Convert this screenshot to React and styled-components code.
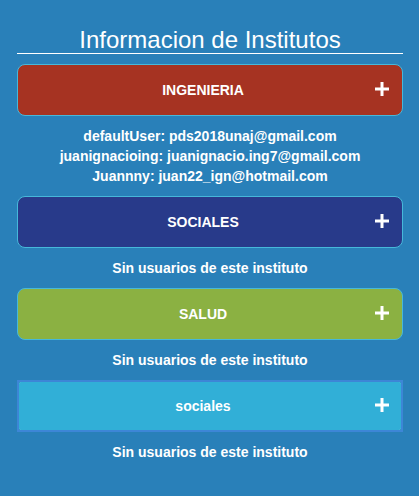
import React from 'react';
import styled, { createGlobalStyle } from 'styled-components';

const GlobalStyle = createGlobalStyle`
	html, body {
		margin: 0;
		padding: 0;
		background-color: #2980b9;
	}
	body {
		font-family: 'Liberation Sans', Arial, sans-serif;
	}
`;

const Page = styled.div`
	width: 419px;
	min-height: 496px;
	box-sizing: border-box;
	padding: 26px 16px 0 17px;
	background-color: #2980b9;
	color: #ffffff;
`;

const Title = styled.h1`
	margin: 0 0 10px;
	font-size: 24px;
	font-weight: 400;
	line-height: 27px;
	text-align: center;
	border-bottom: 1px solid #ffffff;
`;

const Card = styled.div`
	height: 52px;
	box-sizing: border-box;
	position: relative;
	display: flex;
	align-items: center;
	justify-content: center;
	padding-right: 14px;
	background-color: ${(p) => p.color};
	border: 1px solid #46b8da;
	border-radius: 8px;
	font-size: 14px;
	font-weight: 700;
	cursor: pointer;

	&::after {
		content: '';
		display: ${(p) => (p.focused ? 'block' : 'none')};
		position: absolute;
		inset: -1px;
		border: 2px solid #3d86d6;
		pointer-events: none;
	}
`;

const Plus = styled.svg`
	position: absolute;
	right: 13px;
	top: 17px;
`;

const Users = styled.div`
	padding: 10px 0;
	font-size: 14px;
	font-weight: 700;
	line-height: 20px;
	text-align: center;
`;

const institutos = [
	{
		nombre: 'INGENIERIA',
		color: '#a63322',
		usuarios: [
			'defaultUser: pds2018unaj@gmail.com',
			'juanignacioing: juanignacio.ing7@gmail.com',
			'Juannny: juan22_ign@hotmail.com'
		]
	},
	{ nombre: 'SOCIALES', color: '#283a8a', usuarios: [] },
	{ nombre: 'SALUD', color: '#8bb142', usuarios: [] },
	{ nombre: 'sociales', color: '#31afd7', usuarios: [], focused: true }
];

const PlusIcon = () => (
	<Plus width='14' height='14' viewBox='0 0 14 14'>
		<rect x='5.5' y='0' width='3' height='14' fill='#fff' />
		<rect x='0' y='5.5' width='14' height='3' fill='#fff' />
	</Plus>
);

const App = () => {
	return (
		<Page>
			<GlobalStyle />
			<Title>Informacion de Institutos</Title>
			{institutos.map((inst) => (
				<div key={inst.nombre}>
					<Card color={inst.color} focused={inst.focused}>
						{inst.nombre}
						<PlusIcon />
					</Card>
					<Users>
						{inst.usuarios.length ? (
							inst.usuarios.map((u) => <div key={u}>{u}</div>)
						) : (
							<div>Sin usuarios de este instituto</div>
						)}
					</Users>
				</div>
			))}
		</Page>
	);
};

export default App;
